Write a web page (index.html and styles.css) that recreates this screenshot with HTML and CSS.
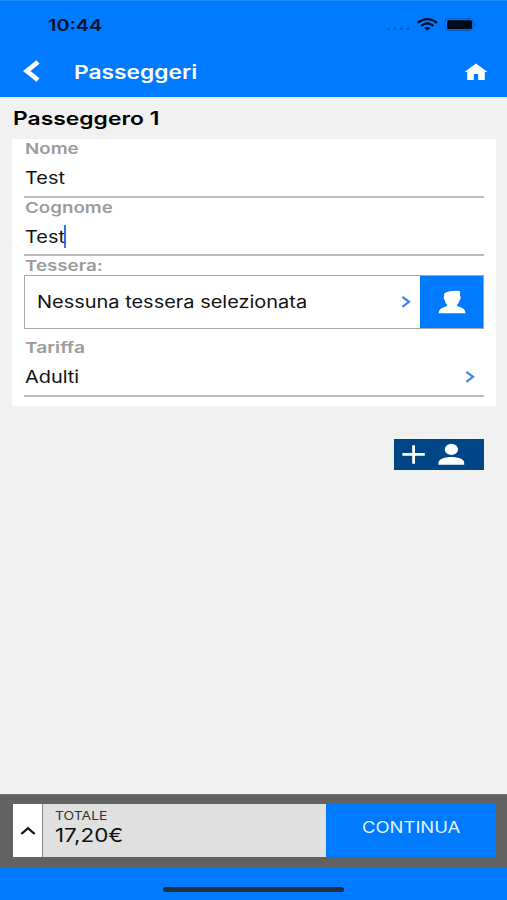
FILE: index.html
```html
<!DOCTYPE html>
<html lang="it">
<head>
<meta charset="utf-8">
<title>Passeggeri</title>
<link rel="stylesheet" href="styles.css">
</head>
<body>
<div class="app">
  <header class="header">
    <div class="status">
      <span class="wide clock">10:44</span>
      <svg class="status-icons" width="92" height="16" viewBox="0 0 92 16">
        <g fill="#075cb8"><circle cx="2.5" cy="12.8" r="1.3"/><circle cx="9" cy="12.8" r="1.3"/><circle cx="15.5" cy="12.8" r="1.3"/><circle cx="22" cy="12.8" r="1.3"/></g>
        <g fill="none" stroke="#00112b" stroke-width="2.2"><path d="M31.5 6.8Q41.3 -.4 51.1 6.8"/><path d="M35.2 9.8Q41.3 5 47.4 9.8"/></g>
        <path d="M38.1 12Q41.3 9.4 44.5 12L41.3 14.6Z" fill="#00112b"/>
        <rect x="59" y="2.8" width="28" height="11.5" rx="3" fill="none" stroke="#0758ad"/>
        <rect x="61" y="4.2" width="25" height="8.8" rx="1.5" fill="#000a18"/>
        <path d="M88.8 6.5Q91.3 8.6 88.8 10.6Z" fill="#0758ad"/>
      </svg>
    </div>
    <div class="navbar">
      <svg class="back" width="18" height="22" viewBox="0 0 18 22"><path d="M16 2L4.8 11L16 20" fill="none" stroke="#fff" stroke-width="4.8"/></svg>
      <h1 class="wide title">Passeggeri</h1>
      <svg class="home" width="24" height="18" viewBox="0 0 24 18"><path d="M12 .5L23.5 8.9H20.8V17H14.2V11H9.8V17H3.2V8.9H.5Z" fill="#fff"/></svg>
    </div>
  </header>
  <main class="content">
    <h2 class="section"><span class="wide section-text">Passeggero 1</span></h2>
    <section class="card">
      <div class="field">
        <div class="label"><span class="wide label-nome">Nome</span></div>
        <div class="value"><span class="wide value-test">Test</span></div>
      </div>
      <div class="field">
        <div class="label"><span class="wide label-cognome">Cognome</span></div>
        <div class="value"><span class="wide value-test">Test</span><i class="caret"></i></div>
      </div>
      <div class="label label-short"><span class="wide label-tessera">Tessera:</span></div>
      <div class="picker">
        <span class="wide picker-text">Nessuna tessera selezionata</span>
        <svg class="chevron" width="10" height="14" viewBox="0 0 10 14"><path d="M1.4 1.8L8 6.8L1.4 11.8" fill="none" stroke="#3d86de" stroke-width="2.2"/></svg>
        <div class="picker-button">
          <svg width="28" height="24" viewBox="0 0 28 24"><path d="M7.4 2.8C10 1 17.5 .2 22.2 1.2L22 5.4C23.1 6.6 22.8 9.2 21.5 10.4C21 12.4 20.3 13.6 19 14.6C19 16 20.2 16.7 22.4 17.3C25.8 18.4 27.2 20 27.6 23.2H.6C1 20 2.4 18.4 5.8 17.3C8 16.7 9.2 16 9.2 14.6C7.9 13.6 7.2 12.4 6.9 10.4C5.6 9.4 5.3 7.2 6.2 6C5.9 4.6 6.2 3.5 7.4 2.8Z" fill="#fff"/></svg>
        </div>
      </div>
      <div class="fare">
        <div class="label"><span class="wide label-tariffa">Tariffa</span></div>
        <div class="value value-select"><span class="wide value-adulti">Adulti</span>
          <svg class="chevron" width="10" height="14" viewBox="0 0 10 14"><path d="M1.4 1.8L8 6.8L1.4 11.8" fill="none" stroke="#3d86de" stroke-width="2.2"/></svg>
        </div>
      </div>
    </section>
    <div class="add">
      <svg width="90" height="31" viewBox="0 0 90 31"><path d="M8.4 15.3H30.8M19.6 6.3V24.8" stroke="#fff" stroke-width="2.8"/><ellipse cx="57.4" cy="10.4" rx="6.6" ry="5.6" fill="#fff"/><path d="M44.5 25.8V23.8C44.5 20.2 50.7 18.1 57.4 18.1S70.2 20.2 70.2 23.8V25.8Z" fill="#fff"/></svg>
    </div>
  </main>
  <footer class="footer">
    <div class="totalbar">
      <div class="expand"><svg width="16" height="10" viewBox="0 0 16 10"><path d="M1.3 8L8 2.2L14.7 8" fill="none" stroke="#111" stroke-width="2.3"/></svg></div>
      <div class="total">
        <span class="wide total-label">TOTALE</span>
        <span class="wide total-value">17,20€</span>
      </div>
      <div class="continue"><span class="wide continue-text">CONTINUA</span></div>
    </div>
    <div class="home-area"><div class="home-indicator"></div></div>
  </footer>
</div>
</body>
</html>
```

FILE: styles.css
```css
* { box-sizing: border-box; }
body { margin: 0; font-family: Inter, "Liberation Sans", sans-serif; color: #111; }
svg { display: block; flex: none; }
h1, h2 { margin: 0; }

.app { width: 507px; height: 900px; display: flex; flex-direction: column; background: #f1f1f1; overflow: hidden; }

/* Extended letterforms: each label sets its own horizontal stretch */
.wide { display: inline-block; white-space: nowrap; transform-origin: 0 50%; transform: scaleX(var(--stretch, 1.2)); }

.header { height: 97px; background: #007bff; border-top: 1px solid #1e8aff; }
.status { height: 48px; padding: 15px 29.5px 0 48px; display: flex; justify-content: space-between; }
.clock { font-size: 16px; line-height: 18px; font-weight: 600; color: #00112b; --stretch: 1.24; }
.navbar { height: 48px; display: flex; align-items: center; padding: 0 19px 0 22px; }
.back { margin-top: -4px; }
.title { margin: -2px auto 0 34px; font-size: 18.5px; line-height: 24px; font-weight: 600; color: #fff; --stretch: 1.23; }
.home { margin-top: -2px; }

.content { flex: 1; padding: 0 12px; }
.section { height: 42px; padding-left: 1px; font-size: 18px; line-height: 43px; font-weight: 600; color: #000; }
.section-text { --stretch: 1.27; }
.card { width: 484px; height: 267px; padding: 0 12px; background: #fff; }
.field { height: 59px; border-bottom: 2px solid #bcbcbc; }
.field + .field { height: 58px; }
.label { height: 20px; padding-left: .5px; font-size: 15px; line-height: 20px; font-weight: 600; color: #9b9b9b; --stretch: 1.25; }
.value { height: 37px; padding-left: .5px; font-size: 17px; line-height: 38px; display: flex; align-items: center; }
.label-short { height: 19px; }
.label-tariffa { --stretch: 1.28; }
.value-test { --stretch: 1.17; }
.caret { width: 2px; height: 23px; margin: 0 0 0 5px; background: #3c6fe0; }
.picker { height: 54px; border: 1px solid #a6a6a6; display: flex; align-items: center; padding-left: 12px; }
.picker-text { font-size: 17px; --stretch: 1.174; }
.picker .chevron { margin-left: auto; margin-right: 9px; }
.picker-button { width: 63px; height: 52px; background: #007bff; display: flex; align-items: center; justify-content: center; }
.fare { height: 68px; padding-top: 9px; border-bottom: 2px solid #bcbcbc; }
.value-select { height: 37px; justify-content: space-between; padding-right: 9px; }
.value-adulti { --stretch: 1.17; }
.add { width: 90px; height: 31px; margin: 32.5px 0 0 382.4px; background: #004686; }

.totalbar { height: 73px; padding: 9px 11px 10px 13px; background: #626262; border-top: 1px solid #777; display: flex; }
.expand { width: 29px; background: #fff; display: flex; align-items: center; justify-content: center; }
.total { flex: 1; padding: 5px 0 0 12px; border-left: 1px solid #888; background: #e0e0e0; display: flex; flex-direction: column; align-items: flex-start; }
.total-label { font-size: 12px; line-height: 14px; color: #333; --stretch: 1.16; }
.total-value { font-size: 19px; line-height: 26px; --stretch: 1.18; }
.continue { width: 170px; padding: 13px 0 0 36px; background: #007bff; color: #e4f4ff; }
.continue-text { font-size: 15.5px; line-height: 20px; --stretch: 1.19; }
.home-area { height: 33px; padding-top: 20px; background: #007bff; }
.home-indicator { width: 181px; height: 5px; margin-left: 163.4px; border-radius: 3px; background: #252e3b; }
```
